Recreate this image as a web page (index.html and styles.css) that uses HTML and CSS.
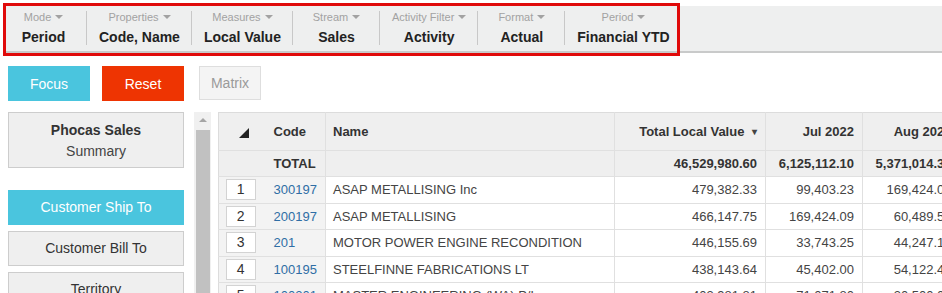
FILE: index.html
```html
<!DOCTYPE html>
<html>
<head>
<meta charset="utf-8">
<link rel="stylesheet" href="styles.css">
</head>
<body>
<div class="page">
  <div class="topbar">
    <div class="fi first"><div class="fl">Mode<i class="caret"></i></div><div class="fv">Period</div></div>
    <div class="fi"><div class="fl">Properties<i class="caret"></i></div><div class="fv">Code, Name</div></div>
    <div class="fi"><div class="fl">Measures<i class="caret"></i></div><div class="fv">Local Value</div></div>
    <div class="fi"><div class="fl">Stream<i class="caret"></i></div><div class="fv">Sales</div></div>
    <div class="fi"><div class="fl">Activity Filter<i class="caret"></i></div><div class="fv">Activity</div></div>
    <div class="fi"><div class="fl">Format<i class="caret"></i></div><div class="fv">Actual</div></div>
    <div class="fi"><div class="fl">Period<i class="caret"></i></div><div class="fv">Financial YTD</div></div>
  </div>
  <div class="highlight"></div>

  <div class="toolbar">
    <button class="btn btn-focus">Focus</button>
    <button class="btn btn-reset">Reset</button>
    <button class="btn btn-matrix">Matrix</button>
  </div>

  <div class="main">
    <div class="sidebar">
      <div class="dash"><div class="dash-title">Phocas Sales</div><div class="dash-sub">Summary</div></div>
      <div class="dims">
        <div class="dim active">Customer Ship To</div>
        <div class="dim">Customer Bill To</div>
        <div class="dim">Territory</div>
      </div>
    </div>
    <div class="vscroll">
      <div class="vscroll-up"><i class="up"></i></div>
      <div class="vscroll-thumb"></div>
    </div>
    <div class="gridwrap">
      <table class="grid">
        <colgroup>
          <col class="c-num"><col class="c-code"><col class="c-name"><col class="c-total"><col class="c-mon"><col class="c-mon2">
        </colgroup>
        <thead>
          <tr class="hrow">
            <th class="frz tri-cell"><svg width="10" height="10" viewBox="0 0 10 10"><polygon points="10,0 10,10 0,10" fill="#222"/></svg></th>
            <th class="frz left">Code</th>
            <th class="left bl">Name</th>
            <th class="right bl">Total Local Value <span class="sort">&#9662;</span></th>
            <th class="right bl">Jul 2022</th>
            <th class="right bl">Aug 2022</th>
          </tr>
        </thead>
        <tbody>
          <tr class="trow">
            <td class="frz"></td>
            <td class="frz left">TOTAL</td>
            <td class="bl"></td>
            <td class="right bl">46,529,980.60</td>
            <td class="right bl">6,125,112.10</td>
            <td class="right bl">5,371,014.30</td>
          </tr>
          <tr>
            <td class="frz"><span class="rank">1</span></td>
            <td class="frz left"><a class="code">300197</a></td>
            <td class="bl">ASAP METALLISING Inc</td>
            <td class="right bl">479,382.33</td>
            <td class="right bl">99,403.23</td>
            <td class="right bl">169,424.09</td>
          </tr>
          <tr>
            <td class="frz"><span class="rank">2</span></td>
            <td class="frz left"><a class="code">200197</a></td>
            <td class="bl">ASAP METALLISING</td>
            <td class="right bl">466,147.75</td>
            <td class="right bl">169,424.09</td>
            <td class="right bl">60,489.52</td>
          </tr>
          <tr>
            <td class="frz"><span class="rank">3</span></td>
            <td class="frz left"><a class="code">201</a></td>
            <td class="bl">MOTOR POWER ENGINE RECONDITION</td>
            <td class="right bl">446,155.69</td>
            <td class="right bl">33,743.25</td>
            <td class="right bl">44,247.18</td>
          </tr>
          <tr>
            <td class="frz"><span class="rank">4</span></td>
            <td class="frz left"><a class="code">100195</a></td>
            <td class="bl">STEELFINNE FABRICATIONS LT</td>
            <td class="right bl">438,143.64</td>
            <td class="right bl">45,402.00</td>
            <td class="right bl">54,122.40</td>
          </tr>
          <tr>
            <td class="frz"><span class="rank">5</span></td>
            <td class="frz left"><a class="code">100201</a></td>
            <td class="bl">MASTER ENGINEERING (WA) P/L</td>
            <td class="right bl">403,981.81</td>
            <td class="right bl">71,071.80</td>
            <td class="right bl">30,500.00</td>
          </tr>
        </tbody>
      </table>
    </div>
  </div>
</div>
</body>
</html>
```

FILE: styles.css
```css
* { box-sizing: border-box; }
html, body { margin: 0; padding: 0; background: #fff; }
body {
  font-family: "Liberation Sans", Arial, sans-serif;
  color: #333;
  width: 942px;
  height: 293px;
  overflow: hidden;
}
.page { position: relative; height: 293px; overflow: hidden; }

/* top filter bar */
.topbar {
  margin: 6px 0 0 6px;
  height: 47px;
  background: #eeefef;
  border-bottom: 2px solid #c9caca;
  display: flex;
  align-items: flex-start;
}
.fi {
  margin-top: 5px;
  min-width: 87px;
  padding: 0 11px 0 12px;
  border-left: 1px solid #c8c8c8;
  text-align: center;
  height: 34px;
}
.fi.first { border-left: none; padding-left: 6px; min-width: 80px; }
.fl {
  font-size: 11px;
  line-height: 13px;
  color: #a2a2a2;
  white-space: nowrap;
}
.caret {
  display: inline-block;
  width: 0; height: 0;
  border-left: 4px solid transparent;
  border-right: 4px solid transparent;
  border-top: 4px solid #a2a2a2;
  margin-left: 4px;
  vertical-align: 2px;
}
.fv {
  margin-top: 5px;
  font-size: 14px;
  line-height: 17px;
  font-weight: bold;
  color: #222;
  white-space: nowrap;
}
.highlight {
  position: absolute;
  left: 3px;
  top: 3px;
  width: 677px;
  height: 53px;
  border: 3px solid #e00a0a;
  pointer-events: none;
}

/* toolbar */
.toolbar {
  display: flex;
  align-items: flex-start;
  padding: 13px 0 0 8px;
  height: 59px;
}
.btn {
  font-family: "Liberation Sans", Arial, sans-serif;
  font-size: 14px;
  height: 35px;
  border: none;
  padding: 0;
  color: #fff;
}
.btn-focus { width: 82px; background: #4ac5de; }
.btn-reset { width: 82px; background: #ee3402; margin-left: 12px; }
.btn-matrix {
  width: 62px;
  height: 34px;
  margin-left: 15px;
  background: #f4f4f4;
  border: 1px solid #dedede;
  color: #9a9a9a;
}

/* main */
.main {
  display: flex;
  padding-left: 8px;
  height: 181px;
  overflow: hidden;
}
.sidebar { width: 176px; flex: none; }
.dash {
  height: 56px;
  background: #efefef;
  border: 1px solid #cdcdcd;
  text-align: center;
  padding-top: 9px;
  font-size: 14px;
}
.dash-title { font-weight: bold; color: #333; line-height: 17px; }
.dash-sub { color: #444; line-height: 17px; margin-top: 4px; }
.dims { margin-top: 22px; display: flex; flex-direction: column; gap: 6px; }
.dim {
  height: 35px;
  line-height: 33px;
  text-align: center;
  font-size: 14px;
  color: #333;
  background: #efefef;
  border: 1px solid #cdcdcd;
}
.dim.active { background: #4ac5de; border-color: #4ac5de; color: #fff; }

.vscroll {
  flex: none;
  width: 17px;
  margin-left: 10px;
  background: #f0f0f0;
  display: flex;
  flex-direction: column;
}
.vscroll-up { height: 18px; display: flex; justify-content: center; padding-top: 6px; }
.up {
  width: 0; height: 0;
  border-left: 4px solid transparent;
  border-right: 4px solid transparent;
  border-bottom: 4px solid #a5a5a5;
}
.vscroll-thumb { flex: 1; margin: 0 1px 0 2px; background: #c1c1c1; }

.gridwrap { flex: none; margin-left: 7px; width: 800px; overflow: hidden; }
.grid {
  border-collapse: collapse;
  table-layout: fixed;
  width: 741px;
  font-size: 13px;
  border-top: 1px solid #dcdcdc;
  border-left: 1px solid #dcdcdc;
}
.c-num { width: 44px; }
.c-code { width: 63px; }
.c-name { width: 289px; }
.c-total { width: 151px; }
.c-mon { width: 97px; }
.c-mon2 { width: 97px; }
.grid th, .grid td {
  padding: 0 8px;
  white-space: nowrap;
  overflow: hidden;
  border-bottom: 1px solid #e0e0e0;
}
.grid th { font-weight: bold; color: #333; background: #efefef; height: 38px; }
.grid td { height: 26.5px; color: #444; }
.grid .left { text-align: left; padding-left: 11px; }
.grid td.bl, .grid th.bl { border-left: 1px solid #e0e0e0; padding-left: 7px; }
.grid .right { text-align: right; padding-right: 8px; }
.grid th.right.bl, .grid td.right.bl { padding-right: 8px; }
.tri-cell { text-align: center; padding: 4px 0 0 6px !important; }
.sort { font-size: 10px; margin-left: 4px; color: #444; vertical-align: 1px; }
.trow td { background: #efefef; font-weight: bold; color: #333; height: 26px; }
.frz { background: #f3f3f3; }
td.frz { text-align: center; padding: 0; }
td.frz.left { text-align: left; padding-left: 11px; }
.rank {
  display: inline-block;
  width: 30px;
  height: 21px;
  line-height: 19px;
  background: #fff;
  border: 1px solid #d3d3d3;
  font-size: 14px;
  color: #333;
  text-align: center;
  vertical-align: middle;
}
.code { color: #2f6ea5; text-decoration: none; }
```
